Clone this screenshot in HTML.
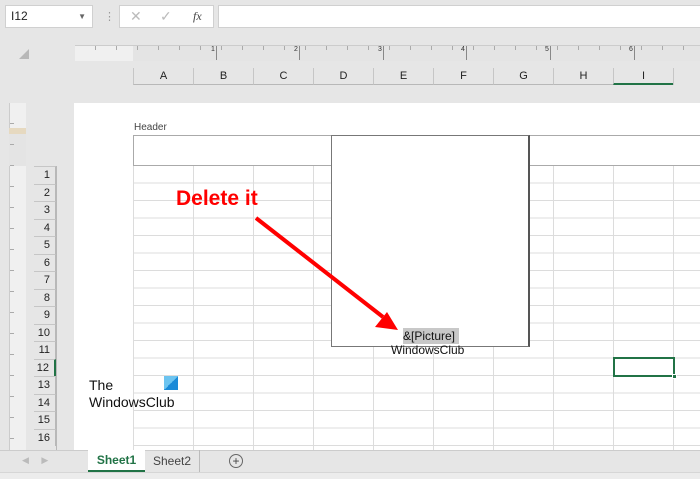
<!DOCTYPE html>
<html><head><style>
*{margin:0;padding:0;box-sizing:border-box}
body{width:700px;height:479px;overflow:hidden;background:#e6e6e6;font-family:"Liberation Sans",sans-serif;position:relative}
.a{position:absolute}
.ch{position:absolute;top:68px;height:17px;width:60px;border-left:1px solid #c6c6c6;border-bottom:1px solid #b8b8b8;font-size:11px;text-align:center;line-height:17px;color:#222}
.rh{position:absolute;left:34px;width:22px;height:17.5px;border-top:1px solid #c6c6c6;border-right:1px solid #b8b8b8;font-size:11px;text-align:right;padding-right:5px;line-height:17px;color:#222}
</style></head><body>
<div class="a" style="left:5px;top:5px;width:88px;height:23px;background:#fff;border:1px solid #d0d0d0;font-size:12px;line-height:21px;padding-left:5px;color:#222">I12<span style="position:absolute;right:6px;top:0;font-size:8px;color:#666">▼</span></div>
<div class="a" style="left:104px;top:10px;color:#999;font-size:11px">⋮</div>
<div class="a" style="left:119px;top:5px;width:95px;height:23px;background:#fff;border:1px solid #d0d0d0;font-size:14px;line-height:21px;color:#bbb"><span style="position:absolute;left:10px">✕</span><span style="position:absolute;left:40px">✓</span><span style="position:absolute;left:73px;font-family:'Liberation Serif',serif;font-style:italic;font-size:12px;color:#444">fx</span></div>
<div class="a" style="left:218px;top:5px;width:490px;height:23px;background:#fff;border:1px solid #d0d0d0"></div>
<div class="a" style="left:19px;top:49px;width:0;height:0;border-left:10px solid transparent;border-bottom:10px solid #b8b8b8"></div>
<div class="a" style="left:75px;top:45px;width:625px;height:16px;background:#e4e4e4;border-top:1px solid #ccc"></div>
<div class="a" style="left:75px;top:46px;width:58px;height:15px;background:#f0f0f0"></div>
<div class="a" style="left:75px;top:46px;width:625px;height:4px;background:repeating-linear-gradient(90deg,transparent 0 20px,#aaa 20px 21px)"></div>
<div class="a" style="left:216px;top:46px;width:1px;height:14px;background:#888"></div><div class="a" style="left:211px;top:46px;font-size:7px;color:#333">1</div>
<div class="a" style="left:299px;top:46px;width:1px;height:14px;background:#888"></div><div class="a" style="left:294px;top:46px;font-size:7px;color:#333">2</div>
<div class="a" style="left:383px;top:46px;width:1px;height:14px;background:#888"></div><div class="a" style="left:378px;top:46px;font-size:7px;color:#333">3</div>
<div class="a" style="left:466px;top:46px;width:1px;height:14px;background:#888"></div><div class="a" style="left:461px;top:46px;font-size:7px;color:#333">4</div>
<div class="a" style="left:550px;top:46px;width:1px;height:14px;background:#888"></div><div class="a" style="left:545px;top:46px;font-size:7px;color:#333">5</div>
<div class="a" style="left:634px;top:46px;width:1px;height:14px;background:#888"></div><div class="a" style="left:629px;top:46px;font-size:7px;color:#333">6</div>
<div class="ch" style="left:133px">A</div><div class="ch" style="left:193px">B</div><div class="ch" style="left:253px">C</div><div class="ch" style="left:313px">D</div><div class="ch" style="left:373px">E</div><div class="ch" style="left:433px">F</div><div class="ch" style="left:493px">G</div><div class="ch" style="left:553px">H</div><div class="ch" style="left:613px;border-bottom:2px solid #217346">I</div>
<div class="a" style="left:673px;top:68px;width:1px;height:17px;background:#c6c6c6"></div>
<div class="a" style="left:9px;top:103px;width:17px;height:347px;background:#f0f0f0;border-left:1px solid #ccc"></div>
<div class="a" style="left:9px;top:128px;width:17px;height:6px;background:#e6d9c0"></div>
<div class="a" style="left:9px;top:134px;width:17px;height:32px;background:#e4e4e4"></div>
<div class="a" style="left:10px;top:103px;width:4px;height:347px;background:repeating-linear-gradient(180deg,transparent 0 20px,#aaa 20px 21px)"></div>
<div class="a" style="left:56px;top:166px;width:1px;height:284px;background:#b8b8b8"></div>
<div class="rh" style="top:166px">1</div><div class="rh" style="top:183.5px">2</div><div class="rh" style="top:201px">3</div><div class="rh" style="top:218.5px">4</div><div class="rh" style="top:236px">5</div><div class="rh" style="top:253.5px">6</div><div class="rh" style="top:271px">7</div><div class="rh" style="top:288.5px">8</div><div class="rh" style="top:306px">9</div><div class="rh" style="top:323.5px">10</div><div class="rh" style="top:341px">11</div><div class="rh" style="top:358.5px;border-right:2px solid #217346">12</div><div class="rh" style="top:376px">13</div><div class="rh" style="top:393.5px">14</div><div class="rh" style="top:411px">15</div><div class="rh" style="top:428.5px">16</div>
<div class="a" style="left:74px;top:103px;width:626px;height:347px;background:#fff"></div>
<div class="a" style="left:133px;top:166px;width:567px;height:284px;background:repeating-linear-gradient(180deg,transparent 0 16.5px,#dcdcdc 16.5px 17.5px),repeating-linear-gradient(90deg,#dcdcdc 0 1px,transparent 1px 60px)"></div>
<div class="a" style="left:134px;top:122px;font-size:10px;color:#444">Header</div>
<div class="a" style="left:133px;top:135px;width:567px;height:31px;background:#fff;border:1px solid #aaa;border-right:none"></div>
<div class="a" style="left:331px;top:135px;width:199px;height:212px;background:#fff;border:1px solid #777;border-right:2px solid #555"></div>
<div class="a" style="left:403px;top:328px;width:56px;height:16px;background:#c8c8c8"></div>
<div class="a" style="left:403px;top:329px;font-size:12px;color:#111">&amp;[Picture]</div>
<div class="a" style="left:391px;top:343px;font-size:12px;color:#111">WindowsClub</div>
<div class="a" style="left:613px;top:357px;width:62px;height:20px;border:2px solid #217346"></div>
<div class="a" style="left:672px;top:374px;width:5px;height:5px;background:#217346;border:1px solid #fff"></div>
<div class="a" style="left:89px;top:377px;font-size:14px;color:#111;line-height:17px">The<br>WindowsClub</div>
<div class="a" style="left:164px;top:376px;width:14px;height:14px;background:linear-gradient(135deg,#6cc4f0 50%,#1a8ad8 50%)"></div>
<div class="a" style="left:176px;top:187px;font-size:21px;font-weight:bold;color:#f00">Delete it</div>
<svg class="a" style="left:0;top:0" width="700" height="479"><line x1="256" y1="218" x2="383" y2="317" stroke="#f00" stroke-width="4"/><polygon points="398,330 375,327 387,312" fill="#f00"/></svg>
<div class="a" style="left:0;top:450px;width:700px;height:22px;background:#e6e6e6;border-top:1px solid #ccc"></div>
<div class="a" style="left:22px;top:455px;font-size:9px;color:#bbb">◀&nbsp;&nbsp;&nbsp;&nbsp;&nbsp;▶</div>
<div class="a" style="left:88px;top:450px;width:57px;height:22px;background:#fff;border-bottom:2px solid #217346;font-size:12px;font-weight:bold;color:#217346;text-align:center;line-height:21px">Sheet1</div>
<div class="a" style="left:145px;top:450px;width:55px;height:22px;font-size:12px;color:#444;text-align:center;line-height:22px;border-right:1px solid #bbb">Sheet2</div>
<div class="a" style="left:229px;top:454px;width:14px;height:14px;border:1px solid #666;border-radius:50%;font-size:12px;line-height:12px;text-align:center;color:#444">+</div>
<div class="a" style="left:0;top:472px;width:700px;height:7px;background:#ececec;border-top:1px solid #d6d6d6"></div>
</body></html>
